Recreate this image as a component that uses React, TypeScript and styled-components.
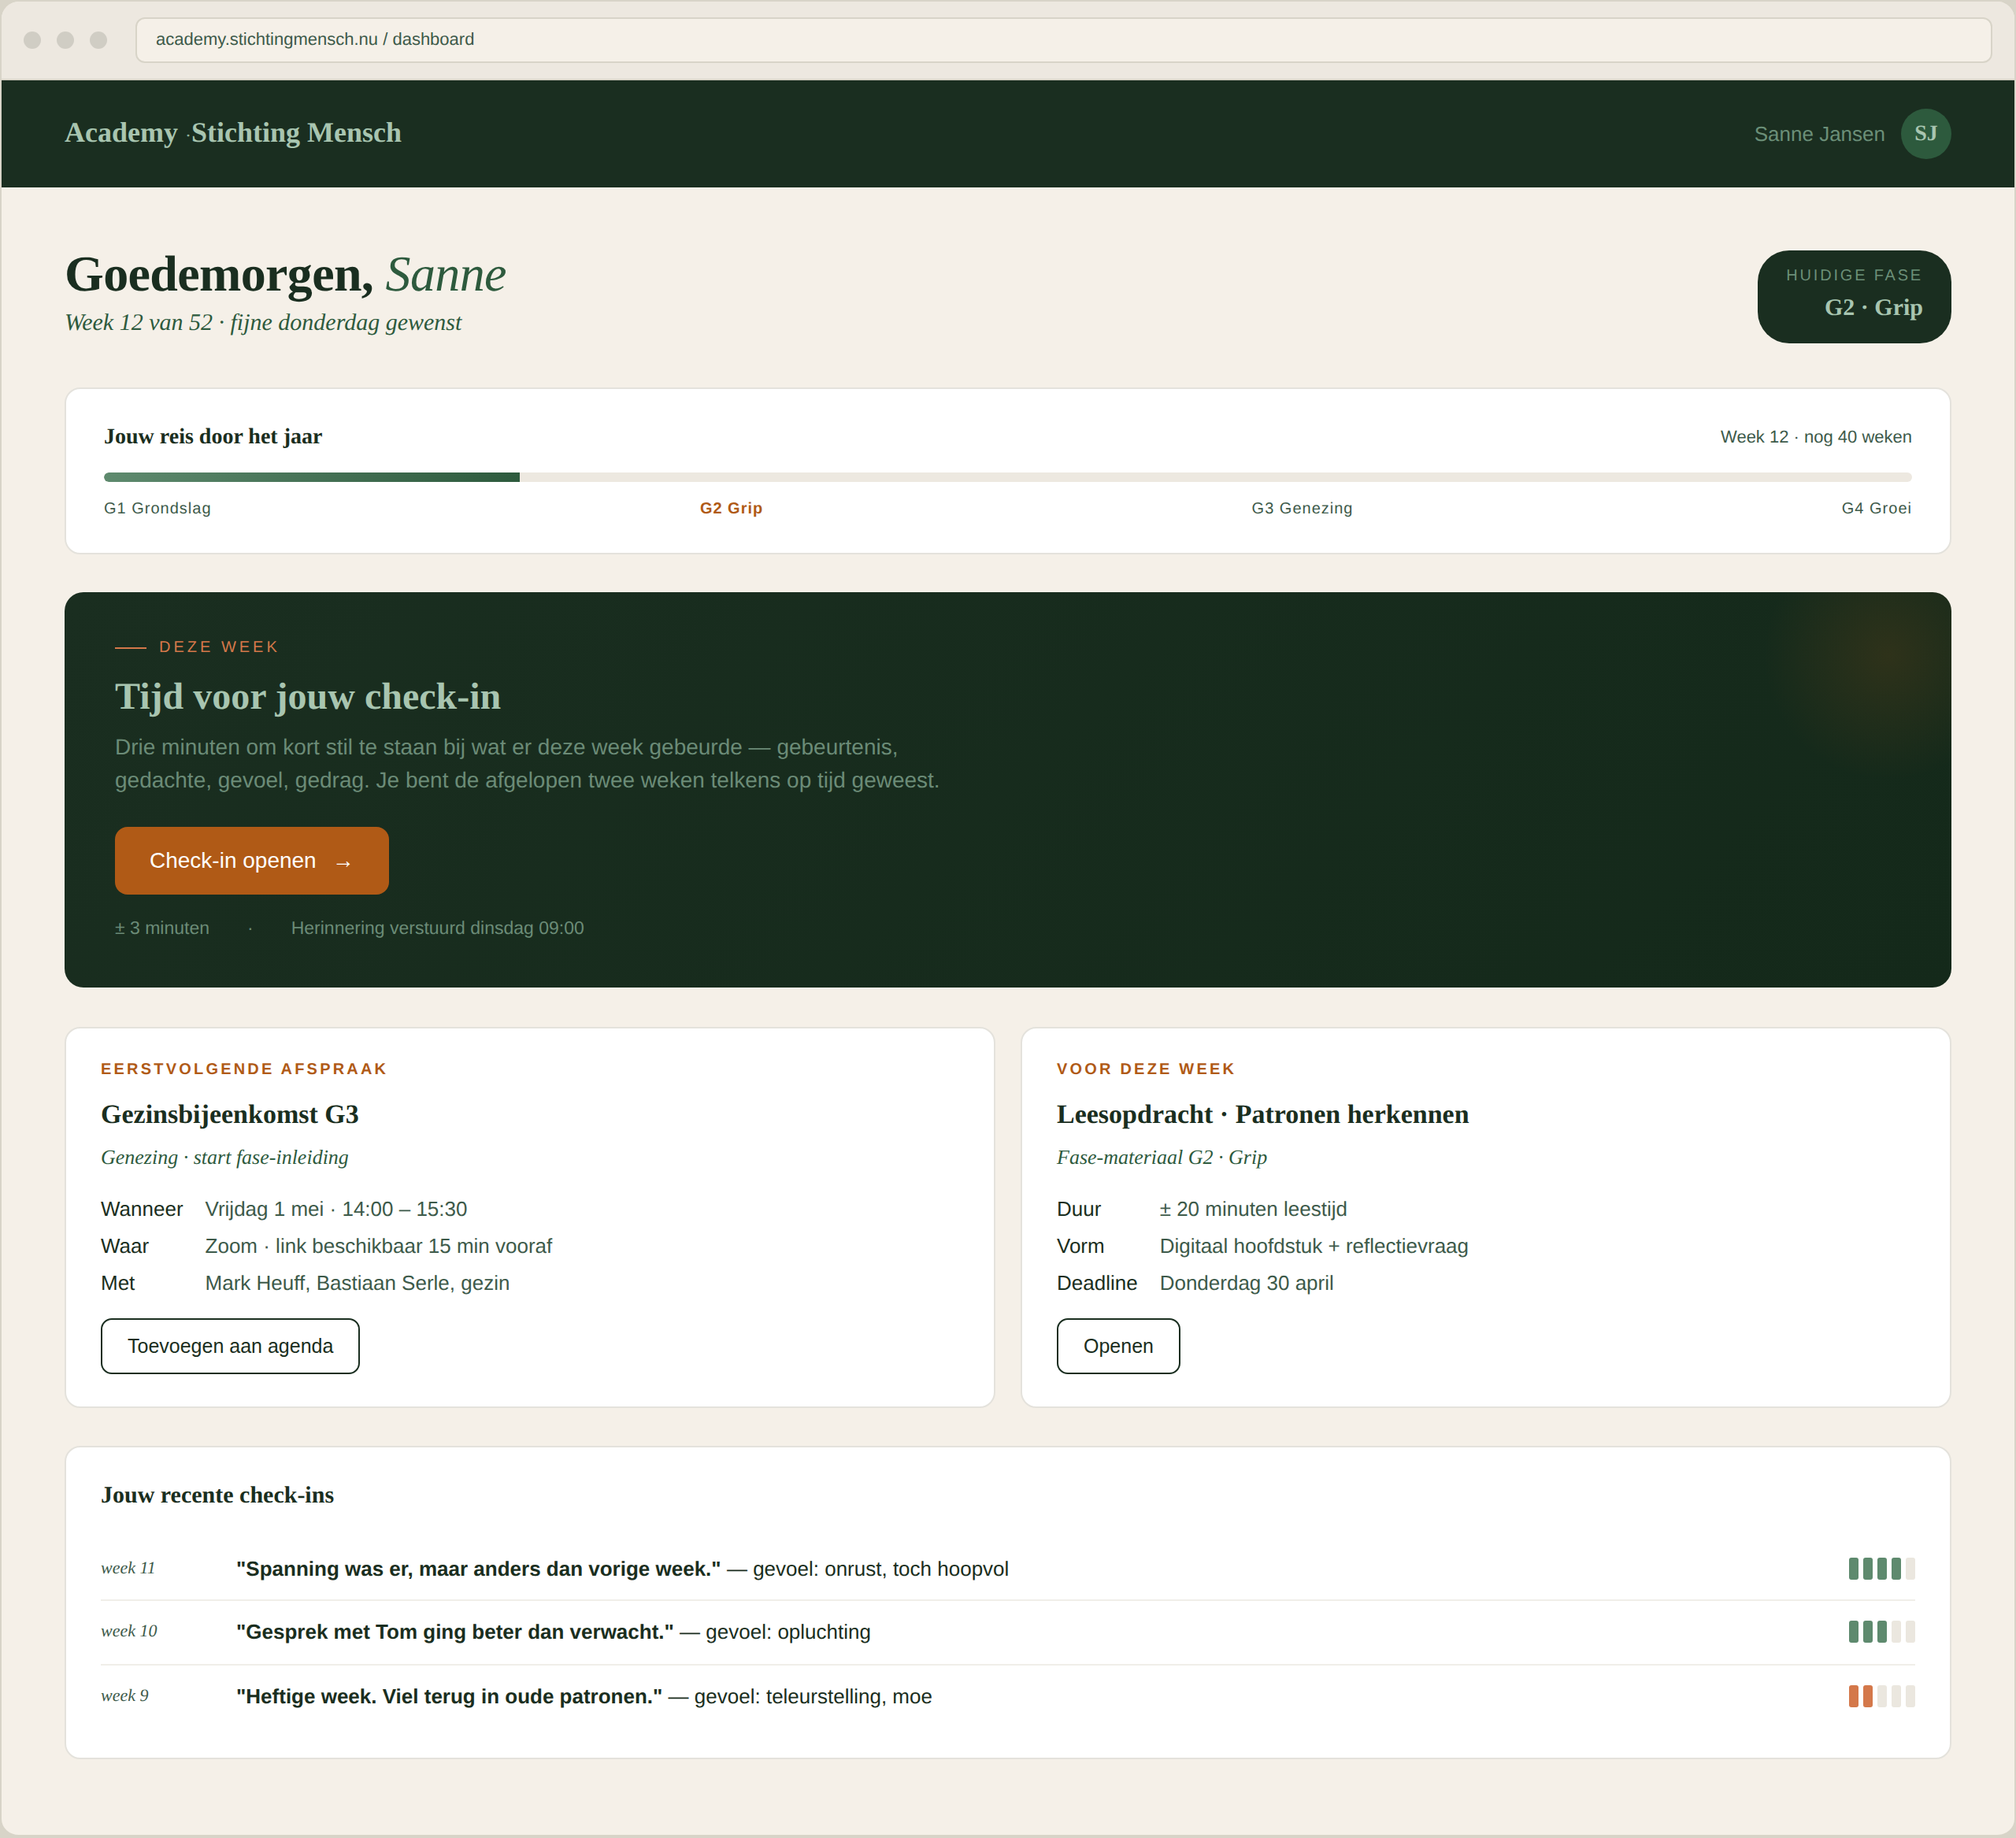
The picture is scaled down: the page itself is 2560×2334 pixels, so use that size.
import styled, { createGlobalStyle } from 'styled-components';

const GlobalStyle = createGlobalStyle`
  html, body {
    margin: 0;
    padding: 0;
    background: #d8d4c8;
  }
  * {
    box-sizing: border-box;
  }
  body {
    font-family: "Liberation Sans", Arial, sans-serif;
    text-rendering: geometricPrecision;
    color: #1a2e20;
  }
`;

const serif = `"Liberation Serif", "Times New Roman", serif`;

const Frame = styled.div`
  width: 2560px;
  height: 2334px;
  background: #f5f0e8;
  border: 2px solid #d8d4c8;
  border-bottom-width: 4px;
  border-radius: 24px;
  overflow: hidden;
`;

const ChromeBar = styled.div`
  display: flex;
  align-items: center;
  height: 100px;
  padding: 0 28px;
  background: #ede8e0;
  border-bottom: 2px solid #d8d4c8;
`;

const Dots = styled.div`
  display: flex;
  gap: 20px;
  margin-right: 36px;
`;

const Dot = styled.span`
  width: 22px;
  height: 22px;
  border-radius: 50%;
  background: #d0cdc4;
`;

const UrlBar = styled.div`
  flex: 1;
  height: 58px;
  display: flex;
  align-items: center;
  padding: 0 24px 2px;
  background: #f5f0e8;
  border: 2px solid #d8d4c8;
  border-radius: 12px;
  font-size: 22px;
  color: #3d5a4a;
`;

const TopNav = styled.header`
  display: flex;
  align-items: center;
  justify-content: space-between;
  height: 136px;
  padding: 0 80px;
  background: #1a2e20;
`;

const Logo = styled.div`
  padding-bottom: 5px;
  font-family: ${serif};
  font-size: 36px;
  font-weight: 700;
  color: #a8c5b0;
`;

const LogoDot = styled.span`
  font-weight: 400;
  font-size: 24px;
  color: #8fb09b;
`;

const UserBox = styled.div`
  display: flex;
  align-items: center;
  gap: 20px;
`;

const UserName = styled.span`
  font-size: 26px;
  color: #6b8f78;
`;

const Avatar = styled.div`
  width: 64px;
  height: 64px;
  border-radius: 50%;
  display: flex;
  align-items: center;
  justify-content: center;
  background: #2d5a3d;
  color: #a8c5b0;
  font-family: ${serif};
  font-size: 28px;
  font-weight: 700;
`;

const Main = styled.main`
  padding: 80px 80px 96px;
`;

const Welcome = styled.section`
  display: flex;
  align-items: flex-start;
  justify-content: space-between;
  margin-bottom: 56px;
`;

const Greeting = styled.h1`
  margin: 0;
  font-family: ${serif};
  font-size: 64px;
  font-weight: 700;
  letter-spacing: -0.01em;
  line-height: 60px;
  color: #1a2e20;

  em {
    font-weight: 400;
    color: #2d5a3d;
  }
`;

const GreetingSub = styled.p`
  margin: 15px 0 0;
  font-family: ${serif};
  font-style: italic;
  font-size: 30px;
  color: #2d5a3d;
`;

const PhaseBadge = styled.div`
  width: 246px;
  height: 118px;
  padding: 17px 36px;
  border-radius: 40px;
  background: #1a2e20;
  text-align: right;
`;

const PhaseLabel = styled.div`
  font-size: 20px;
  letter-spacing: 0.14em;
  line-height: 30px;
  white-space: nowrap;
  color: #6b8f78;
`;

const PhaseValue = styled.div`
  margin-top: 9px;
  font-family: ${serif};
  font-size: 30px;
  font-weight: 700;
  color: #a8c5b0;
`;

const Card = styled.section`
  background: #fff;
  border: 2px solid #e4e2dc;
  border-radius: 20px;
`;

const JourneyCard = styled(Card)`
  height: 212px;
  padding: 40px 48px;
  margin-bottom: 48px;
`;

const JourneyHead = styled.div`
  display: flex;
  align-items: center;
  justify-content: space-between;
  height: 38px;
  padding-top: 3px;
  margin-bottom: 28px;
`;

const JourneyTitle = styled.h2`
  margin: 0;
  font-family: ${serif};
  font-size: 28px;
  font-weight: 700;
`;

const JourneyMeta = styled.span`
  font-size: 22px;
  color: #3d5a4a;
`;

const Track = styled.div`
  height: 12px;
  border-radius: 6px;
  background: #ede8e0;
  overflow: hidden;
`;

const TrackFill = styled.div`
  width: 23%;
  height: 100%;
  border-radius: 6px 0 0 6px;
  background: linear-gradient(90deg, #5e8a6e, #2d5a3d);
`;

const Phases = styled.div`
  display: flex;
  justify-content: space-between;
  margin-top: 23px;
`;

const PhaseName = styled.span<{ $active?: boolean }>`
  font-size: 20px;
  letter-spacing: 0.05em;
  font-weight: ${(p) => (p.$active ? 700 : 400)};
  color: ${(p) => (p.$active ? '#b05a16' : '#3d5a4a')};
`;

const Hero = styled.section`
  position: relative;
  height: 502px;
  padding: 56px 64px;
  margin-bottom: 50px;
  border-radius: 24px;
  overflow: hidden;
  background: linear-gradient(135deg, #1a2e20, #14291a);

  &::before {
    content: '';
    position: absolute;
    top: -80px;
    right: -80px;
    width: 320px;
    height: 320px;
    background: radial-gradient(circle, rgba(179, 92, 20, 0.16) 0%, transparent 70%);
  }
`;

const Eyebrow = styled.div`
  display: flex;
  align-items: center;
  gap: 16px;
  font-size: 20px;
  letter-spacing: 0.2em;
  line-height: 28px;
  color: #d4784a;

  &::before {
    content: '';
    width: 40px;
    height: 2px;
    margin-top: 2px;
    background: #d4784a;
  }
`;

const HeroTitle = styled.h2`
  margin: 19px 0 0;
  font-family: ${serif};
  font-size: 48px;
  font-weight: 700;
  line-height: 60px;
  color: #a8c5b0;
`;

const HeroText = styled.p`
  margin: 13px 0 0;
  max-width: 1120px;
  font-size: 28px;
  line-height: 42px;
  color: #6b8b77;
`;

const PrimaryButton = styled.button`
  display: flex;
  align-items: center;
  gap: 20px;
  height: 86px;
  margin-top: 38px;
  padding: 0 44px;
  border: 0;
  border-radius: 16px;
  background: #b05a16;
  color: #fff;
  font-family: inherit;
  font-size: 28px;
`;

const HeroMeta = styled.div`
  display: flex;
  gap: 48px;
  margin-top: 29px;
  font-size: 23px;
  color: #6b8b77;
`;

const TwoCol = styled.div`
  display: grid;
  grid-template-columns: 1fr 1fr;
  gap: 32px;
  margin-bottom: 48px;
`;

const InfoCard = styled(Card)`
  height: 484px;
  padding: 38px 44px;
`;

const InfoLabel = styled.div`
  font-size: 20px;
  font-weight: 700;
  letter-spacing: 0.16em;
  line-height: 28px;
  color: #b05a16;
`;

const InfoTitle = styled.h3`
  margin: 22px 0 0;
  font-family: ${serif};
  font-size: 34px;
  font-weight: 700;
  line-height: 44px;
`;

const InfoSub = styled.p`
  margin: 13.5px 0 0;
  font-family: ${serif};
  font-style: italic;
  font-size: 26px;
  line-height: 36px;
  color: #2d5a3d;
`;

const Details = styled.dl`
  display: grid;
  grid-template-columns: auto 1fr;
  column-gap: 28px;
  row-gap: 4px;
  margin: 26.5px 0 0;
  font-size: 26px;
  line-height: 43px;
`;

const DetailKey = styled.dt`
  color: #1a2e20;
`;

const DetailValue = styled.dd`
  margin: 0;
  color: #3d5a4a;
`;

const OutlineButton = styled.button`
  display: block;
  height: 71px;
  margin-top: 23px;
  padding: 0 32px;
  background: #fff;
  border: 2px solid #1a2e20;
  border-radius: 14px;
  color: #1a2e20;
  font-family: inherit;
  font-size: 25px;
`;

const RecentCard = styled(Card)`
  height: 398px;
  padding: 41px 44px 0;
`;

const RecentTitle = styled.h2`
  margin: 0 0 32px;
  font-family: ${serif};
  font-size: 30px;
  font-weight: 700;
  line-height: 40px;
`;

const CheckinRow = styled.div`
  display: flex;
  align-items: center;
  height: 82px;
  padding-bottom: 2px;
  border-bottom: 2px solid #f0eee9;

  &:first-of-type {
    padding: 2px 0 0;
  }

  &:last-child {
    border-bottom: 0;
    height: 80px;
  }
`;

const WeekLabel = styled.span`
  width: 172px;
  padding-bottom: 2px;
  font-family: ${serif};
  font-style: italic;
  font-size: 22px;
  color: #3d5a4a;
`;

const Quote = styled.span`
  flex: 1;
  font-size: 26px;
  color: #1a2e20;

  strong {
    font-weight: 700;
  }
`;

const Mood = styled.div`
  display: flex;
  gap: 6px;
`;

const MoodBar = styled.span<{ $tone: 'good' | 'low' | 'empty' }>`
  width: 12px;
  height: 28px;
  border-radius: 3px;
  background: ${(p) =>
    p.$tone === 'good' ? '#5e8a6e' : p.$tone === 'low' ? '#d4784a' : '#ebe7df'};
`;

const checkins = [
  { week: 'week 11', quote: '"Spanning was er, maar anders dan vorige week."', feeling: 'gevoel: onrust, toch hoopvol', filled: 4, tone: 'good' as const },
  { week: 'week 10', quote: '"Gesprek met Tom ging beter dan verwacht."', feeling: 'gevoel: opluchting', filled: 3, tone: 'good' as const },
  { week: 'week 9', quote: '"Heftige week. Viel terug in oude patronen."', feeling: 'gevoel: teleurstelling, moe', filled: 2, tone: 'low' as const },
];

export default function App() {
  return (
    <>
      <GlobalStyle />
      <Frame>
        <ChromeBar>
          <Dots>
            <Dot />
            <Dot />
            <Dot />
          </Dots>
          <UrlBar>academy.stichtingmensch.nu / dashboard</UrlBar>
        </ChromeBar>

        <TopNav>
          <Logo>
            Academy <LogoDot>·</LogoDot>Stichting Mensch
          </Logo>
          <UserBox>
            <UserName>Sanne Jansen</UserName>
            <Avatar>SJ</Avatar>
          </UserBox>
        </TopNav>

        <Main>
          <Welcome>
            <div>
              <Greeting>
                Goedemorgen, <em>Sanne</em>
              </Greeting>
              <GreetingSub>Week 12 van 52 · fijne donderdag gewenst</GreetingSub>
            </div>
            <PhaseBadge>
              <PhaseLabel>HUIDIGE FASE</PhaseLabel>
              <PhaseValue>G2 · Grip</PhaseValue>
            </PhaseBadge>
          </Welcome>

          <JourneyCard>
            <JourneyHead>
              <JourneyTitle>Jouw reis door het jaar</JourneyTitle>
              <JourneyMeta>Week 12 · nog 40 weken</JourneyMeta>
            </JourneyHead>
            <Track>
              <TrackFill />
            </Track>
            <Phases>
              <PhaseName>G1 Grondslag</PhaseName>
              <PhaseName $active>G2 Grip</PhaseName>
              <PhaseName>G3 Genezing</PhaseName>
              <PhaseName>G4 Groei</PhaseName>
            </Phases>
          </JourneyCard>

          <Hero>
            <Eyebrow>DEZE WEEK</Eyebrow>
            <HeroTitle>Tijd voor jouw check-in</HeroTitle>
            <HeroText>
              Drie minuten om kort stil te staan bij wat er deze week gebeurde — gebeurtenis,
              gedachte, gevoel, gedrag. Je bent de afgelopen twee weken telkens op tijd geweest.
            </HeroText>
            <PrimaryButton>
              Check-in openen <span>→</span>
            </PrimaryButton>
            <HeroMeta>
              <span>± 3 minuten</span>
              <span>·</span>
              <span>Herinnering verstuurd dinsdag 09:00</span>
            </HeroMeta>
          </Hero>

          <TwoCol>
            <InfoCard>
              <InfoLabel>EERSTVOLGENDE AFSPRAAK</InfoLabel>
              <InfoTitle>Gezinsbijeenkomst G3</InfoTitle>
              <InfoSub>Genezing · start fase-inleiding</InfoSub>
              <Details>
                <DetailKey>Wanneer</DetailKey>
                <DetailValue>Vrijdag 1 mei · 14:00 – 15:30</DetailValue>
                <DetailKey>Waar</DetailKey>
                <DetailValue>Zoom · link beschikbaar 15 min vooraf</DetailValue>
                <DetailKey>Met</DetailKey>
                <DetailValue>Mark Heuff, Bastiaan Serle, gezin</DetailValue>
              </Details>
              <OutlineButton>Toevoegen aan agenda</OutlineButton>
            </InfoCard>
            <InfoCard>
              <InfoLabel>VOOR DEZE WEEK</InfoLabel>
              <InfoTitle>Leesopdracht · Patronen herkennen</InfoTitle>
              <InfoSub>Fase-materiaal G2 · Grip</InfoSub>
              <Details>
                <DetailKey>Duur</DetailKey>
                <DetailValue>± 20 minuten leestijd</DetailValue>
                <DetailKey>Vorm</DetailKey>
                <DetailValue>Digitaal hoofdstuk + reflectievraag</DetailValue>
                <DetailKey>Deadline</DetailKey>
                <DetailValue>Donderdag 30 april</DetailValue>
              </Details>
              <OutlineButton>Openen</OutlineButton>
            </InfoCard>
          </TwoCol>

          <RecentCard>
            <RecentTitle>Jouw recente check-ins</RecentTitle>
            {checkins.map((c) => (
              <CheckinRow key={c.week}>
                <WeekLabel>{c.week}</WeekLabel>
                <Quote>
                  <strong>{c.quote}</strong> — {c.feeling}
                </Quote>
                <Mood>
                  {[0, 1, 2, 3, 4].map((i) => (
                    <MoodBar key={i} $tone={i < c.filled ? c.tone : 'empty'} />
                  ))}
                </Mood>
              </CheckinRow>
            ))}
          </RecentCard>
        </Main>
      </Frame>
    </>
  );
}
